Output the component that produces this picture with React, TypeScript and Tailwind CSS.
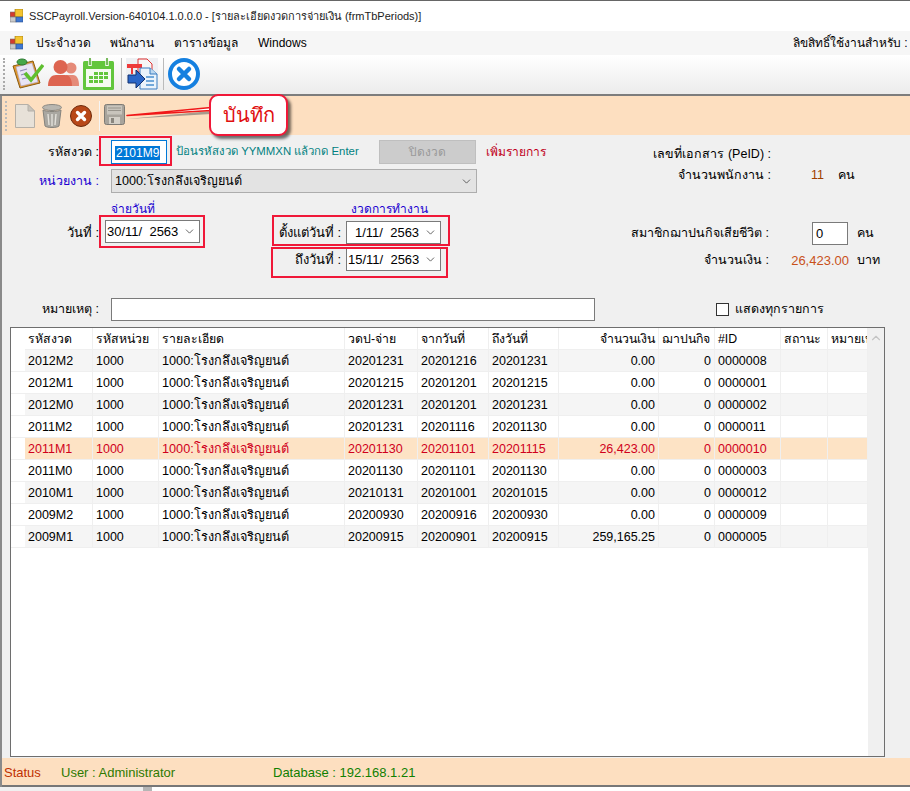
import React from 'react';
import {ChevronDown, ChevronUp} from 'lucide-react';

type Period = {
	code: string;
	payDate: string;
	from: string;
	to: string;
	amount: string;
	id: string;
};

const PERIODS: Period[] = [
	{code: '2012M2', payDate: '20201231', from: '20201216', to: '20201231', amount: '0.00', id: '0000008'},
	{code: '2012M1', payDate: '20201215', from: '20201201', to: '20201215', amount: '0.00', id: '0000001'},
	{code: '2012M0', payDate: '20201231', from: '20201201', to: '20201231', amount: '0.00', id: '0000002'},
	{code: '2011M2', payDate: '20201231', from: '20201116', to: '20201130', amount: '0.00', id: '0000011'},
	{code: '2011M1', payDate: '20201130', from: '20201101', to: '20201115', amount: '26,423.00', id: '0000010'},
	{code: '2011M0', payDate: '20201130', from: '20201101', to: '20201130', amount: '0.00', id: '0000003'},
	{code: '2010M1', payDate: '20210131', from: '20201001', to: '20201015', amount: '0.00', id: '0000012'},
	{code: '2009M2', payDate: '20200930', from: '20200916', to: '20200930', amount: '0.00', id: '0000009'},
	{code: '2009M1', payDate: '20200915', from: '20200901', to: '20200915', amount: '259,165.25', id: '0000005'},
];

const GRID = 'grid grid-cols-[14px_68px_66px_186px_73px_71px_70px_100px_56px_66px_47px_40px]';
const CELL = 'overflow-hidden whitespace-nowrap border-r border-b border-[#efefef] pl-[3px] text-[12.5px] leading-[22px]';
const HEAD = 'overflow-hidden whitespace-nowrap border-r border-b border-[#efefef] pl-[3px] text-[12.3px] leading-[22px]';
const NAME = 'overflow-hidden whitespace-nowrap border-r border-b border-[#efefef] pl-[3px] text-[12.7px] leading-[22px]';

function AppIcon() {
	return (
		<svg width="13" height="14" viewBox="0 0 13 14">
			<rect x="0" y="3" width="6" height="5" fill="#d23b2e" stroke="#777" strokeWidth="0.6" />
			<rect x="5" y="0" width="8" height="8" fill="#f4c430" stroke="#8a6d10" strokeWidth="0.6" />
			<rect x="0" y="8" width="6" height="5" fill="#c9c9c9" stroke="#777" strokeWidth="0.6" />
			<rect x="6" y="8" width="7" height="5" fill="#3f78d0" stroke="#2b4f8f" strokeWidth="0.6" />
		</svg>
	);
}

function ClipboardIcon() {
	return (
		<svg width="32" height="31" viewBox="0 0 32 31">
			<path d="M1 8 L21 3 L28 25 L8 30 Z" fill="#e49a2a" stroke="#8a5a12" />
			<path d="M4 9 L20 5 L26 24 L9 28 Z" fill="#e8e4f4" stroke="#a8a0c8" strokeWidth="0.6" />
			<path d="M8 13 L15 11 M9 17 L15 15 M10 21 L18 19" stroke="#9088b8" strokeWidth="1.2" />
			<ellipse cx="10" cy="4" rx="5" ry="3" fill="#46a84a" stroke="#2d7a32" />
			<path d="M13 15 L19 22 L31 7" fill="none" stroke="#5fbf2f" strokeWidth="3.5" />
		</svg>
	);
}

function UsersIcon() {
	return (
		<svg width="31" height="27" viewBox="0 0 31 27" fill="#dd6450">
			<circle cx="23" cy="8" r="5.5" fill="#e58a78" />
			<path d="M18 15 H25 C29 15 31 19 31 26 H18 Z" fill="#e58a78" />
			<circle cx="12.5" cy="7" r="7" />
			<path d="M0 26 C0 18 4 15 8 15 H17 C21 15 24 18 24 26 Z" />
		</svg>
	);
}

function CalendarIcon() {
	return (
		<svg width="32" height="32" viewBox="0 0 32 32">
			<rect x="0" y="3" width="31" height="29" rx="1.5" fill="#62c63c" />
			<rect x="3" y="11" width="25" height="18" fill="#f4fbf0" />
			<path d="M7 1 V8 M24 1 V8" stroke="#f4fbf0" strokeWidth="3.5" />
			<path d="M7 0 V7 M24 0 V7" stroke="#4fa52e" strokeWidth="1.5" />
			<g fill="#62c63c">
				<rect x="11" y="14" width="4" height="3" />
				<rect x="16" y="14" width="4" height="3" />
				<rect x="21" y="14" width="4" height="3" />
				<rect x="6" y="18" width="4" height="3" />
				<rect x="11" y="18" width="4" height="3" />
				<rect x="16" y="18" width="4" height="3" />
				<rect x="21" y="18" width="4" height="3" />
				<rect x="6" y="22" width="4" height="3" />
				<rect x="11" y="22" width="4" height="3" />
				<rect x="16" y="22" width="4" height="3" />
			</g>
		</svg>
	);
}

function TransferIcon() {
	return (
		<svg width="32" height="32" viewBox="0 0 32 32">
			<path d="M12 1 H21 L26 6 V14 H12 Z" fill="#f6f6f6" stroke="#d33" />
			<rect x="1" y="6" width="15" height="4" fill="#ee3a3a" />
			<path d="M6 10 V16" stroke="#ee3a3a" strokeWidth="2" />
			<path d="M14 10 H24 L31 16 V31 H14 Z" fill="#eaf3fb" stroke="#3a7cc0" />
			<path d="M24 10 V16 H31" fill="#bcd8f0" stroke="#3a7cc0" />
			<path d="M20 19 H28 M20 23 H28 M20 27 H28" stroke="#4a90d0" strokeWidth="1.3" />
			<path d="M2 17 H10 V12 L19 21 L10 30 V25 H2 Z" fill="#2a66c8" stroke="#12306e" />
		</svg>
	);
}

function BlueCloseIcon() {
	return (
		<svg width="32" height="32" viewBox="0 0 32 32">
			<circle cx="16" cy="16" r="14" fill="#fff" stroke="#1580e0" strokeWidth="4" />
			<path d="M11 11 L21 21 M21 11 L11 21" stroke="#1580e0" strokeWidth="4.5" strokeLinecap="round" />
		</svg>
	);
}

function BlankDocIcon() {
	return (
		<svg width="20" height="24" viewBox="0 0 20 24">
			<path d="M0.5 0.5 H13 L19.5 7 V23.5 H0.5 Z" fill="#e7e1d8" stroke="#b5b0a8" />
			<path d="M13 0.5 V7 H19.5 Z" fill="#c9c4bb" stroke="#b5b0a8" />
		</svg>
	);
}

function TrashIcon() {
	return (
		<svg width="20" height="24" viewBox="0 0 20 24">
			<ellipse cx="10" cy="3.5" rx="9.5" ry="3" fill="#b8b6b0" stroke="#8a8882" />
			<path d="M1 6 L3 22 C5 24 15 24 17 22 L19 6 C15 8 5 8 1 6 Z" fill="#a9a7a1" stroke="#85837d" />
			<path d="M6 10 L7 21 M10 10 V22 M14 10 L13 21" stroke="#e2e0da" strokeWidth="1.4" />
		</svg>
	);
}

function CancelIcon() {
	return (
		<svg width="22" height="22" viewBox="0 0 22 22">
			<circle cx="11" cy="11" r="10.5" fill="#b84818" stroke="#6e2a0c" />
			<path d="M7.5 7.5 L14.5 14.5 M14.5 7.5 L7.5 14.5" stroke="#fff" strokeWidth="3.4" strokeLinecap="round" />
		</svg>
	);
}

function FloppyIcon() {
	return (
		<svg width="21" height="21" viewBox="0 0 21 21">
			<rect x="0.5" y="0.5" width="20" height="20" rx="2" fill="#a8a49c" stroke="#7d7a74" />
			<rect x="3" y="1.5" width="15" height="9" fill="#c8c4bc" />
			<path d="M4 4 H17 M4 6.5 H17" stroke="#98948c" />
			<rect x="5" y="13" width="11" height="7" fill="#d4d0c8" />
			<rect x="7" y="14" width="3" height="5" fill="#8a867e" />
		</svg>
	);
}

function DatePicker({value, className}: {value: string; className: string}) {
	return (
		<div className={`flex h-[23px] w-[95px] items-center border border-[#7a7a7a] bg-white text-[13px] ${className}`}>
			<span className="flex-1 whitespace-pre">{value}</span>
			<ChevronDown size={13} strokeWidth={1.5} className="mr-[3px] shrink-0 text-[#444]" />
		</div>
	);
}

export default function App() {
	return (
		<div className="flex h-[791px] w-[910px] flex-col overflow-hidden bg-white font-['Liberation_Sans','Noto_Sans',sans-serif] text-[12.5px] text-black">
			{/* title bar */}
			<div className="flex h-[31px] shrink-0 items-center gap-[6px] border-t border-[#666] pl-[10px] text-[11px] text-[#222]">
				<AppIcon />
				<span className="whitespace-nowrap">SSCPayroll.Version-640104.1.0.0.0 - [รายละเอียดงวดการจ่ายเงิน (frmTbPeriods)]</span>
			</div>

			{/* menu */}
			<div className="flex h-[24px] shrink-0 items-center bg-[#f6f6f6] pl-[10px] text-[12px] whitespace-nowrap">
				<AppIcon />
				<span className="ml-[13px] w-[74px]">ประจำงวด</span>
				<span className="w-[64px]">พนักงาน</span>
				<span className="w-[84px]">ตารางข้อมูล</span>
				<span>Windows</span>
				<span className="ml-auto w-[117px] overflow-hidden">ลิขสิทธิ์ใช้งานสำหรับ :</span>
			</div>

			{/* main toolbar */}
			<div className="flex h-[41px] shrink-0 items-center border-b-2 border-[#7d7d7d] bg-gradient-to-b from-white to-[#ececec] pb-[2px]">
				<div className="ml-[3px] h-[32px] w-[2px] border-l-2 border-dotted border-[#aaa]" />
				<div className="ml-[7px] flex w-[32px]"><ClipboardIcon /></div>
				<div className="ml-[4px] flex w-[31px]"><UsersIcon /></div>
				<div className="ml-[4px] flex w-[32px]"><CalendarIcon /></div>
				<div className="ml-[6px] h-[32px] w-px bg-[#bbb]" />
				<div className="ml-[4px] flex bg-[#eef0f3]"><TransferIcon /></div>
				<div className="ml-[5px] h-[32px] w-px bg-[#bbb]" />
				<div className="ml-[4px] flex"><BlueCloseIcon /></div>
			</div>

			<div className="flex min-h-0 flex-1 flex-col border-l-2 border-[#8a8a8a] bg-[#f0f0f0]">
				{/* record toolbar */}
				<div className="relative flex h-[39px] shrink-0 items-center bg-[#fddfc0]">
					<div className="ml-[3px] h-[30px] w-[2px] border-l-2 border-dotted border-[#bbb]" />
					<div className="ml-[8px] flex"><BlankDocIcon /></div>
					<div className="ml-[7px] flex"><TrashIcon /></div>
					<div className="ml-[8px] flex"><CancelIcon /></div>
					<div className="ml-[7px] h-[30px] w-px bg-[#f5f5f5]" />
					<div className="ml-[4px] mb-[2px] flex"><FloppyIcon /></div>
					<svg width="86" height="22" viewBox="0 0 86 22" className="absolute top-[5px] left-[124px] z-10">
						<path d="M1 16 L85 8 V11 Z" fill="#a89a8c" transform="translate(0 2)" />
						<path d="M1 14.5 L85 6.5 V9.5 Z" fill="#fff" stroke="#f01818" strokeWidth="1.6" strokeLinejoin="round" />
					</svg>
					<div className="absolute -top-[2px] left-[207px] z-20 flex h-[42px] w-[79px] items-center justify-center rounded-[9px] border-2 border-[#f01838] bg-white text-[20px] text-[#e01010] shadow-[3px_3px_3px_rgba(0,0,0,0.55)]">
						บันทึก
					</div>
				</div>

				{/* form */}
				<div className="flex h-[163px] shrink-0">
					<div className="w-[598px] shrink-0">
						<div className="mt-[5px] flex h-[24px] items-center">
							<span className="w-[97px] text-right">รหัสงวด :</span>
							<div className="relative ml-[12px] h-[24px] w-[56px] border border-[#0078d7] bg-white pt-[3px] pl-[3px] text-[12px]">
								<span className="bg-[#0078d7] px-px text-white">2101M9</span>
								<div className="absolute -top-[5px] -right-[6px] -bottom-[3px] -left-[13px] border-2 border-[#f01838]" />
							</div>
							<span className="ml-[9px] w-[203px] text-[11.4px] text-[#008080]">ป้อนรหัสงวด YYMMXN แล้วกด Enter</span>
							<div className="flex h-[24px] w-[97px] items-center justify-center border border-[#bfbfbf] bg-[#cccccc] text-[12px] text-[#9a9a9a]">ปิดงวด</div>
							<span className="ml-[10px] text-[12px] text-[#c00020]">เพิ่มรายการ</span>
						</div>
						<div className="mt-[5px] flex h-[24px] items-center">
							<span className="w-[97px] text-right text-[#2000d0]">หน่วยงาน :</span>
							<div className="ml-[12px] flex h-[24px] w-[366px] items-center border border-[#adadad] bg-[#e3e3e3] pl-[3px]">
								<span className="flex-1 text-[12.6px]">1000:โรงกลึงเจริญยนต์</span>
								<ChevronDown size={13} strokeWidth={1.5} className="mr-[3px] text-[#444]" />
							</div>
						</div>
						<div className="flex h-[28px] items-center pt-[4px] text-[12px] text-[#2000d0]">
							<span className="ml-[109px] w-[240px]">จ่ายวันที่</span>
							<span>งวดการทำงาน</span>
						</div>
						<div className="flex h-[23px] items-center text-[13px]">
							<span className="w-[97px] text-right">วันที่ :</span>
							<div className="relative ml-[6px]">
								<DatePicker value="30/11/  2563" className="-mt-[2px] pl-px" />
								<div className="absolute -top-[7px] -right-[5px] -bottom-[5px] -left-[6px] border-2 border-[#f01838]" />
							</div>
							<span className="w-[141px] text-right">ตั้งแต่วันที่ :</span>
							<div className="relative ml-[5px]">
								<DatePicker value="1/11/  2563" className="pl-[8px]" />
								<div className="absolute -top-[6px] -right-[9px] -bottom-[2px] -left-[74px] border-2 border-[#f01838]" />
							</div>
						</div>
						<div className="mt-[4px] flex h-[23px] items-center text-[13px]">
							<span className="ml-[198px] w-[141px] text-right">ถึงวันที่ :</span>
							<div className="relative ml-[5px]">
								<DatePicker value="15/11/  2563" className="pl-[1px]" />
								<div className="absolute -top-[1px] -right-[7px] -bottom-[7px] -left-[75px] border-2 border-[#f01838]" />
							</div>
						</div>
					</div>
					<div className="flex-1 whitespace-nowrap">
						<div className="mt-[9px] flex h-[20px] items-center">
							<span className="w-[171px] text-right">เลขที่เอกสาร (PeID) :</span>
						</div>
						<div className="mt-[1px] flex h-[20px] items-center">
							<span className="w-[171px] text-right">จำนวนพนักงาน :</span>
							<span className="ml-[40px] w-[27px] text-[#a04000]">11</span>
							<span>คน</span>
						</div>
						<div className="mt-[37px] flex h-[23px] items-center">
							<span className="w-[169px] text-right">สมาชิกฌาปนกิจเสียชีวิต :</span>
							<div className="ml-[43px] h-[23px] w-[36px] border border-[#7a7a7a] bg-white pl-[3px] text-[13px] leading-[21px]">0</div>
							<span className="ml-[9px]">คน</span>
						</div>
						<div className="mt-[4px] flex h-[23px] items-center">
							<span className="w-[169px] text-right">จำนวนเงิน :</span>
							<span className="w-[80px] text-right text-[13px] text-[#c8501a]">26,423.00</span>
							<span className="ml-[8px]">บาท</span>
						</div>
					</div>
				</div>

				{/* remarks */}
				<div className="flex h-[23px] shrink-0 items-center">
					<span className="w-[97px] text-right">หมายเหตุ :</span>
					<div className="ml-[12px] h-[23px] w-[484px] border border-[#7a7a7a] bg-white" />
					<div className="ml-[121px] h-[13px] w-[13px] border border-[#333] bg-white" />
					<span className="ml-[6px]">แสดงทุกรายการ</span>
				</div>

				{/* grid */}
				<div className="mt-[6px] ml-[8px] flex h-[430px] w-[875px] shrink-0 border border-[#6e6e6e] bg-white">
					<div className="w-[857px] shrink-0">
						<div className={`${GRID} h-[22px]`}>
							<div />
							<div className={HEAD}>รหัสงวด</div>
							<div className={HEAD}>รหัสหน่วย</div>
							<div className={HEAD}>รายละเอียด</div>
							<div className={HEAD}>วดป-จ่าย</div>
							<div className={HEAD}>จากวันที่</div>
							<div className={HEAD}>ถึงวันที่</div>
							<div className={`${HEAD} pr-[3px] text-right`}>จำนวนเงิน</div>
							<div className={HEAD}>ฌาปนกิจ</div>
							<div className={HEAD}>#ID</div>
							<div className={HEAD}>สถานะ</div>
							<div className={HEAD}>หมายเหตุ</div>
						</div>
						{PERIODS.map((row, i) => {
							const selected = row.id === '0000010';
							const tone = selected
								? 'bg-[#fde3c5] text-[#d0001c]'
								: i % 2 === 0 ? 'bg-[#f5f5f5]' : 'bg-white';
							return (
								<div key={row.id} className={`${GRID} h-[22px]`}>
									<div className="border-b border-[#efefef] bg-white" />
									<div className={`${CELL} ${tone}`}>{row.code}</div>
									<div className={`${CELL} ${tone}`}>1000</div>
									<div className={`${NAME} ${tone}`}>1000:โรงกลึงเจริญยนต์</div>
									<div className={`${CELL} ${tone}`}>{row.payDate}</div>
									<div className={`${CELL} ${tone}`}>{row.from}</div>
									<div className={`${CELL} ${tone}`}>{row.to}</div>
									<div className={`${CELL} ${tone} pr-[3px] text-right`}>{row.amount}</div>
									<div className={`${CELL} ${tone} pr-[3px] text-right`}>0</div>
									<div className={`${CELL} ${tone}`}>{row.id}</div>
									<div className={`${CELL} ${tone}`} />
									<div className={`${CELL} ${tone}`} />
								</div>
							);
						})}
					</div>
					<div className="flex-1 bg-[#f0f0f0] pt-[3px]">
						<ChevronUp size={14} strokeWidth={2} className="mx-auto text-[#c4c4c4]" />
					</div>
				</div>

				{/* status */}
				<div className="mt-px flex h-[29px] shrink-0 items-center border-b-2 border-[#777] bg-[#fddfc0] pt-[3px] text-[13px] whitespace-nowrap">
					<span className="ml-[2px] w-[57px] text-[#c03000]">Status</span>
					<span className="w-[212px] text-[#2f7a00]">User : Administrator</span>
					<span className="text-[#108000]">Database : 192.168.1.21</span>
				</div>
			</div>

			{/* whatever lies behind the window */}
			<div className="flex h-[4px] shrink-0">
				<div className="w-[143px] bg-[#f0f0f0]" />
				<div className="w-[9px] bg-[#b5b5b5]" />
			</div>
		</div>
	);
}
